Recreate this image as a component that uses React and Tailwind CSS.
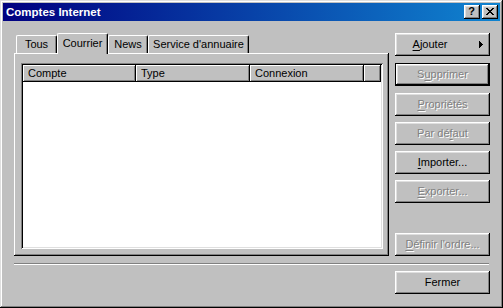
import React from "react";

const RAISED =
  "shadow-[inset_-1px_-1px_0_#000,inset_1px_1px_0_#fff,inset_-2px_-2px_0_#808080,inset_2px_2px_0_#dfdfdf]";

function Label({ pre = "", u = "", post = "", disabled }) {
  return (
    <span
      className={
        disabled
          ? "text-[#808080] [text-shadow:1px_1px_0_#fff]"
          : "text-black"
      }
    >
      {pre}
      {u && <span className="underline underline-offset-[2px]">{u}</span>}
      {post}
    </span>
  );
}

function Btn({ children, def, className = "" }) {
  return (
    <div
      className={
        "h-[23px] w-[95px] shrink-0 flex items-center justify-center bg-[#c0c0c0] " +
        (def
          ? "shadow-[inset_0_0_0_1px_#000,inset_-2px_-2px_0_#000,inset_2px_2px_0_#fff,inset_-3px_-3px_0_#808080,inset_3px_3px_0_#dfdfdf] "
          : RAISED + " ") +
        className
      }
    >
      {children}
    </div>
  );
}

function Tab({ children, w, selected }) {
  return (
    <div
      style={{ width: w }}
      className={
        selected
          ? "h-[21px] -mb-[1px] bg-[#c0c0c0] border-t border-l border-r border-t-white border-l-white border-r-black rounded-t-[2px] shadow-[inset_-1px_0_0_#808080] flex justify-center pt-[2px] relative z-10"
          : "h-[18px] bg-[#c0c0c0] border-t border-l border-r border-t-white border-l-white border-r-black rounded-t-[2px] shadow-[inset_-1px_0_0_#808080] flex justify-center pt-[1px]"
      }
    >
      <span className="leading-[14px]">{children}</span>
    </div>
  );
}

function HeaderCell({ children, w, grow }) {
  return (
    <div
      style={grow ? undefined : { width: w }}
      className={
        "h-[17px] flex items-center pl-[5px] bg-[#c0c0c0] shrink-0 " +
        (grow ? "flex-1 " : "") +
        "shadow-[inset_-1px_-1px_0_#000,inset_1px_1px_0_#fff,inset_-2px_-2px_0_#808080]"
      }
    >
      {children}
    </div>
  );
}

export default function App() {
  return (
    <div className="w-[503px] h-[308px] bg-[#c0c0c0] p-[3px] flex flex-col [font-family:'Liberation_Sans',Arial,sans-serif] text-[11px] text-black shadow-[inset_-1px_-1px_0_#000,inset_1px_1px_0_#dfdfdf,inset_-2px_-2px_0_#808080,inset_2px_2px_0_#fff]">
      {/* Title bar */}
      <div className="h-[18px] shrink-0 flex items-center justify-between pl-[3px] pr-[2px] bg-[linear-gradient(to_right,#000080,#1084d0)]">
        <span className="text-white font-bold text-[11.5px] leading-[14px]">
          Comptes Internet
        </span>
        <div className="flex gap-[2px]">
          <div
            className={
              "w-[16px] h-[14px] bg-[#c0c0c0] flex items-center justify-center " +
              RAISED
            }
          >
            <span className="font-bold text-[11px] leading-[11px] -mt-[1px] -ml-[1px]">?</span>
          </div>
          <div
            className={
              "w-[16px] h-[14px] bg-[#c0c0c0] flex items-center justify-center " +
              RAISED
            }
          >
            <svg width="8" height="7" viewBox="0 0 8 7" shapeRendering="crispEdges" className="-mt-[1px] -ml-[1px]">
              <path
                d="M0 0h2v1h1v1h2V1h1V0h2v1H7v1H6v1H5v1h1v1h1v1h1v1H6V6H5V5H3v1H2v1H0V6h1V5h1V4h1V3H2V2H1V1H0z"
                fill="#000"
              />
            </svg>
          </div>
        </div>
      </div>

      {/* Body */}
      <div className="flex-1 flex flex-col pt-[12px] pl-[11px]">
        <div className="flex h-[223px]">
          {/* Left: tabs + panel */}
          <div className="w-[375px] flex flex-col">
            <div className="h-[20px] flex items-end pl-[2px]">
              <Tab w={41}>Tous</Tab>
              <Tab w={51} selected>
                Courrier
              </Tab>
              <Tab w={40}>News</Tab>
              <Tab w={101}>Service d'annuaire</Tab>
            </div>
            <div className="h-[203px] bg-[#c0c0c0] pt-[10px] pl-[7px] shadow-[inset_-1px_-1px_0_#000,inset_1px_1px_0_#fff,inset_-2px_-2px_0_#808080]">
              <div className="w-[362px] h-[186px] bg-white p-[2px] shadow-[inset_1px_1px_0_#808080,inset_-1px_-1px_0_#fff,inset_2px_2px_0_#000,inset_-2px_-2px_0_#dfdfdf]">
                <div className="flex">
                  <HeaderCell w={113}>Compte</HeaderCell>
                  <HeaderCell w={114}>Type</HeaderCell>
                  <HeaderCell w={114}>Connexion</HeaderCell>
                  <HeaderCell grow />
                </div>
              </div>
            </div>
          </div>

          {/* Right: buttons */}
          <div className="ml-[6px] w-[95px] flex flex-col">
            <Btn className="!justify-start">
              <span className="flex-1 text-center pl-[2px] pr-[16px]">
                <Label u="A" post="jouter" />
              </span>
              <svg width="4" height="7" viewBox="0 0 4 7" className="mr-[7px]" shapeRendering="crispEdges">
                <path d="M0 0h1v1h1v1h1v1h1v1H3v1H2v1H1v1H0z" fill="#000" />
              </svg>
            </Btn>
            <Btn def className="mt-[7px]">
              <Label pre="S" u="u" post="pprimer" disabled />
            </Btn>
            <Btn className="mt-[7px]">
              <Label u="P" post="ropriétés" disabled />
            </Btn>
            <Btn className="mt-[6px]">
              <Label pre="Par dé" u="f" post="aut" disabled />
            </Btn>
            <Btn className="mt-[6px]">
              <Label u="I" post="mporter..." />
            </Btn>
            <Btn className="mt-[6px]">
              <Label u="E" post="xporter..." disabled />
            </Btn>
            <Btn className="mt-auto">
              <Label u="D" post="éfinir l'ordre..." disabled />
            </Btn>
          </div>
        </div>

        {/* Separator */}
        <div className="mt-[7px] w-[475px] h-[2px] border-t border-t-[#808080] border-b border-b-white" />

        {/* Bottom row */}
        <div className="mt-[6px] w-[476px] flex justify-end">
          <Btn>
            <Label post="Fermer" />
          </Btn>
        </div>
      </div>
    </div>
  );
}
